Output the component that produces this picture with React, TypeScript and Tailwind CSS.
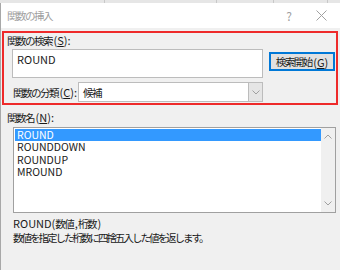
import React from "react";

const font = { fontFamily: '"Noto Sans CJK JP", "Noto Sans", sans-serif' };

const items = ["ROUND", "ROUNDDOWN", "ROUNDUP", "MROUND"];

// Japanese glyphs are narrower in the original UI font; tighten only those runs
function J({ children, tight }: { children: React.ReactNode; tight?: boolean }) {
  return (
    <span className={`text-[10.5px] ${tight ? "tracking-[-2px] mr-[2px]" : "tracking-[-1.5px] mr-[1.5px]"}`}>
      {children}
    </span>
  );
}

function Key({ k }: { k: string }) {
  return <span className="underline underline-offset-1">{k}</span>;
}

function Chevron({ up }: { up?: boolean }) {
  return (
    <svg width="8" height="5" viewBox="0 0 8 5" fill="none" stroke="#a0a0a0" strokeWidth="1">
      {up ? <polyline points="0.5,4.5 4,1 7.5,4.5" /> : <polyline points="0.5,0.5 4,4 7.5,0.5" />}
    </svg>
  );
}

export default function App() {
  return (
    <div className="w-[340px] h-[270px] overflow-hidden flex flex-col bg-[#f0f0f0] text-[11px] text-[#1a1a1a] leading-[14px]" style={font}>
      {/* sheet behind */}
      <div className="h-[3px] flex bg-[#e6e6e6] shrink-0">
        {[105, 112, 57, 54].map((w, i) => (
          <div key={i} className="h-full border-r border-[#c8c8c8]" style={{ width: w }} />
        ))}
      </div>

      <div className="flex-1 flex flex-col border-l border-[#a8a8a8]">
        {/* title bar */}
        <div className="h-[25px] bg-white flex items-center pl-[6px] shrink-0">
          <span className="flex-1 text-[#a0a0a0]"><J>関数の挿入</J></span>
          <span className="text-[#a0a0a0] text-[12px] mr-[24px]">?</span>
          <svg width="11" height="11" viewBox="0 0 11 11" stroke="#a0a0a0" strokeWidth="1" className="mr-[13px]">
            <line x1="0.5" y1="0.5" x2="10.5" y2="10.5" />
            <line x1="10.5" y1="0.5" x2="0.5" y2="10.5" />
          </svg>
        </div>

        <div className="pt-[3px] flex flex-col">
          {/* search group (highlighted) */}
          <div className="ml-[1px] w-[336px] border-2 border-[#ee2a2a] flex flex-col pb-[1px]">
            <div className="h-[14px] pl-[3px]">
              <J>関数の検索</J>(<Key k="S" />):
            </div>
            <div className="flex items-start mt-[2px] pl-[8px]">
              <div className="w-[251px] h-[29px] bg-white border border-[#bcbcbc] px-[4px] pt-[2px]">ROUND</div>
              <button className="ml-[6px] mt-[3px] w-[66px] h-[19px] bg-[#e1e1e1] border border-[#0078d7] outline outline-1 outline-[#0078d7] -outline-offset-2 flex items-center justify-center">
                <J>検索開始</J>(<Key k="G" />)
              </button>
            </div>
            <div className="flex items-center mt-[4px] pl-[9px]">
              <span className="w-[65px]">
                <J>関数の分類</J>(<Key k="C" />):
              </span>
              <div className="w-[185px] h-[20px] bg-white border border-[#bcbcbc] flex items-center">
                <span className="flex-1 pl-[4px]"><J>候補</J></span>
                <div className="w-[14px] h-full bg-[#e5e5e5] border-l border-[#bcbcbc] flex items-center justify-center">
                  <Chevron />
                </div>
              </div>
            </div>
          </div>

          {/* function list */}
          <div className="mt-[5px] h-[14px] pl-[6px]">
            <J>関数名</J>(<Key k="N" />):
          </div>
          <div className="mt-[3px] ml-[12px] w-[323px] h-[86px] bg-white border border-[#a0a0a0] flex">
            <div className="flex-1 flex flex-col pt-[1px] pl-[1px]">
              {items.map((it, i) => (
                <div
                  key={it}
                  className={`h-[12.3px] leading-[12.3px] text-[10.5px] pl-[2px] ${i === 0 ? "bg-[#3399ff] text-white" : ""}`}
                >
                  {it}
                </div>
              ))}
            </div>
            <div className="w-[14px] bg-[#f0f0f0] flex flex-col items-center justify-between py-[6px]">
              <Chevron up />
              <Chevron />
            </div>
          </div>

          {/* description */}
          <div className="mt-[3px] pl-[12px] flex flex-col">
            <span className="h-[14px]">
              ROUND(<J>数値</J>,<J>桁数</J>)
            </span>
            <span className="h-[14px]">
              <J tight>数値を指定した桁数に四捨五入した値を返します。</J>
            </span>
          </div>
        </div>
      </div>
    </div>
  );
}
